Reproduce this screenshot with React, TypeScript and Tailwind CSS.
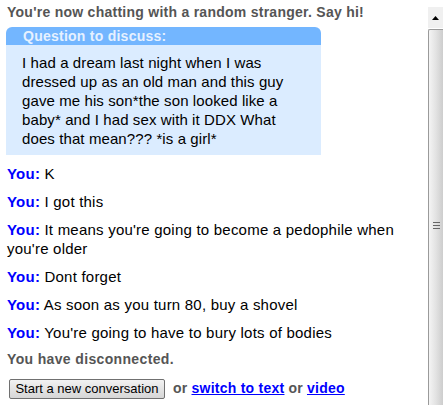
export default function App() {
  const msgs: string[] = [
    "K",
    "I got this",
    "It means you're going to become a pedophile when you're older",
    "Dont forget",
    "As soon as you turn 80, buy a shovel",
    "You're going to have to bury lots of bodies",
  ];
  return (
    <div className="flex w-[443px] h-[405px] overflow-hidden bg-white" style={{ fontFamily: '"Liberation Sans", Arial, sans-serif' }}>
      <div className="flex-1 pl-[7px] pt-[4px]">
        <p className="text-[14px] leading-[16px] font-bold tracking-[0.26px] text-[#555555] whitespace-nowrap">You're now chatting with a random stranger. Say hi!</p>
        <div className="mt-[7px] w-[315px] -ml-[1px]">
          <div className="h-[18px] bg-[#73b6ff] rounded-t-[6px] pl-[17px] text-[14px] leading-[18px] font-bold tracking-[0.25px] text-[#e6f1ff]">Question to discuss:</div>
          <div className="bg-[#dbecff] pl-[16px] pr-[10px] pt-[8px] pb-[7px] text-[15px] leading-[19px] tracking-[0.1px] text-black">
            I had a dream last night when I was dressed up as an old man and this guy gave me his son*the son looked like a baby* and I had sex with it DDX What does that mean??? *is a girl*
          </div>
        </div>
        <div className="mt-[9px] flex flex-col gap-[9px] pr-[4px]">
          {msgs.map((m, i) => (
            <p key={i} className="text-[15px] leading-[19px] tracking-[0.22px] text-black">
              <span className="font-bold text-[#0000ff]">You:</span> {m}
            </p>
          ))}
        </div>
        <p className="mt-[9px] text-[14px] leading-[16px] font-bold tracking-[0.35px] text-[#555555]">You have disconnected.</p>
        <div className="mt-[11px] flex items-center text-[14px] font-bold tracking-[0.25px] text-[#555555]">
          <button className="ml-[2px] h-[20px] w-[156px] border border-[#707070] rounded-[2px] bg-gradient-to-b from-[#f2f2f2] to-[#d6d6d6] text-[13px] font-normal tracking-normal text-black leading-[16px]">Start a new conversation</button>
          <span className="ml-[8px]">or</span>
          <a className="ml-[4px] text-[#0000ff] underline">switch to text</a>
          <span className="ml-[4px]">or</span>
          <a className="ml-[4px] text-[#0000ff] underline">video</a>
        </div>
      </div>
      <div className="w-[15px] flex flex-col pt-[7px]">
        <div className="h-[21px] bg-[#f0f0f0] flex items-center justify-center">
          <svg width="7" height="4" viewBox="0 0 7 4"><path d="M3.5 0 L7 4 L0 4 Z" fill="#000" /></svg>
        </div>
        <div className="flex-1 mt-[1px] border-l border-t border-[#9a9a9a] rounded-tl-[2px] bg-gradient-to-r from-[#f4f4f4] via-[#e2e2e2] to-[#cdcdcd] flex flex-col items-center justify-start">
          <div className="mt-[192px] flex flex-col gap-[2px]">
            <div className="w-[7px] h-[1px] bg-[#666]" />
            <div className="w-[7px] h-[1px] bg-[#666]" />
            <div className="w-[7px] h-[1px] bg-[#666]" />
          </div>
        </div>
      </div>
    </div>
  );
}
